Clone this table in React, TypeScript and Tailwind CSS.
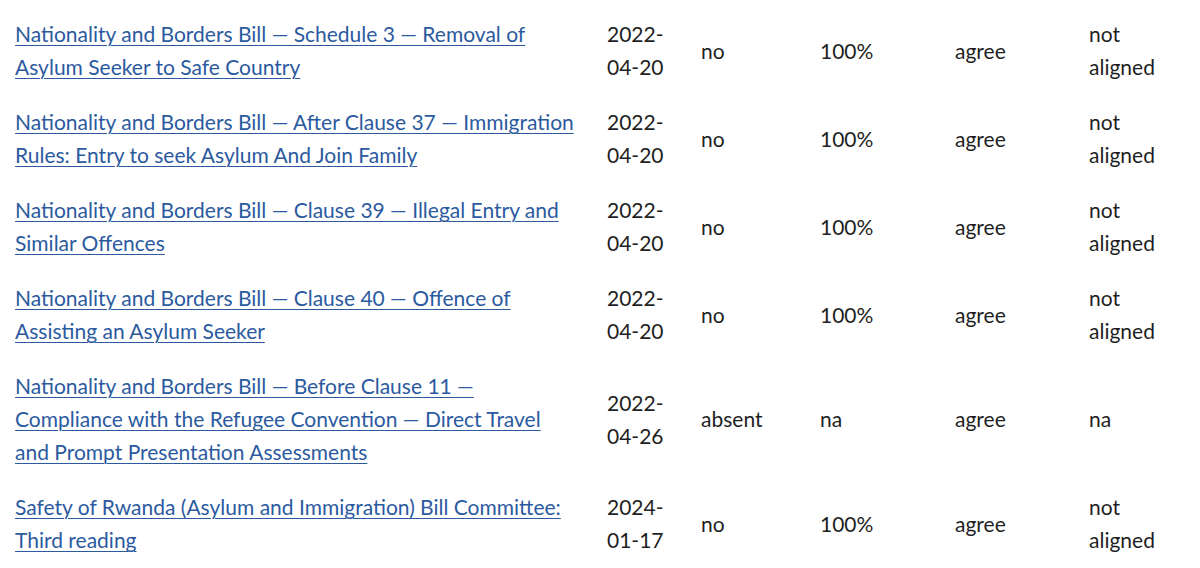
import React from 'react';

type Row = {
  title: string[];
  date: [string, string];
  vote: string;
  pct: string;
  stance: string;
  aligned: string[];
};

const rows: Row[] = [
  {
    title: ['Nationality and Borders Bill — Schedule 3 — Removal of', 'Asylum Seeker to Safe Country'],
    date: ['2022-', '04-20'],
    vote: 'no',
    pct: '100%',
    stance: 'agree',
    aligned: ['not', 'aligned'],
  },
  {
    title: ['Nationality and Borders Bill — After Clause 37 — Immigration', 'Rules: Entry to seek Asylum And Join Family'],
    date: ['2022-', '04-20'],
    vote: 'no',
    pct: '100%',
    stance: 'agree',
    aligned: ['not', 'aligned'],
  },
  {
    title: ['Nationality and Borders Bill — Clause 39 — Illegal Entry and', 'Similar Offences'],
    date: ['2022-', '04-20'],
    vote: 'no',
    pct: '100%',
    stance: 'agree',
    aligned: ['not', 'aligned'],
  },
  {
    title: ['Nationality and Borders Bill — Clause 40 — Offence of', 'Assisting an Asylum Seeker'],
    date: ['2022-', '04-20'],
    vote: 'no',
    pct: '100%',
    stance: 'agree',
    aligned: ['not', 'aligned'],
  },
  {
    title: [
      'Nationality and Borders Bill — Before Clause 11 —',
      'Compliance with the Refugee Convention — Direct Travel',
      'and Prompt Presentation Assessments',
    ],
    date: ['2022-', '04-26'],
    vote: 'absent',
    pct: 'na',
    stance: 'agree',
    aligned: ['na'],
  },
  {
    title: ['Safety of Rwanda (Asylum and Immigration) Bill Committee:', 'Third reading'],
    date: ['2024-', '01-17'],
    vote: 'no',
    pct: '100%',
    stance: 'agree',
    aligned: ['not', 'aligned'],
  },
];

export default function App() {
  return (
    <div className="w-[1200px] h-[568px] overflow-hidden bg-white pt-[6px] text-[#1f1f1f] font-['Lato',sans-serif] text-[21px] leading-[33px]">
      <table className="table-fixed w-full border-collapse">
        <colgroup>
          <col className="w-[592px]" />
          <col className="w-[94px]" />
          <col className="w-[119px]" />
          <col className="w-[135px]" />
          <col className="w-[134px]" />
          <col />
        </colgroup>
        <tbody>
          {rows.map((r, i) => (
            <tr key={i}>
              <td className="px-[15px] py-[11px] align-middle">
                <a href="#" className="text-[#2b5a9f]">
                  {r.title.map((line, j) => (
                    <span key={j} className="block whitespace-nowrap w-fit underline underline-offset-[3px] decoration-1">
                      {line}
                    </span>
                  ))}
                </a>
              </td>
              <td className="px-[15px] py-[11px] align-middle">
                {r.date.map((d, j) => (
                  <div key={j}>{d}</div>
                ))}
              </td>
              <td className="px-[15px] py-[11px] align-middle">{r.vote}</td>
              <td className="px-[15px] py-[11px] align-middle">{r.pct}</td>
              <td className="px-[15px] py-[11px] align-middle">{r.stance}</td>
              <td className="px-[15px] py-[11px] align-middle">
                {r.aligned.map((a, j) => (
                  <div key={j}>{a}</div>
                ))}
              </td>
            </tr>
          ))}
        </tbody>
      </table>
    </div>
  );
}
